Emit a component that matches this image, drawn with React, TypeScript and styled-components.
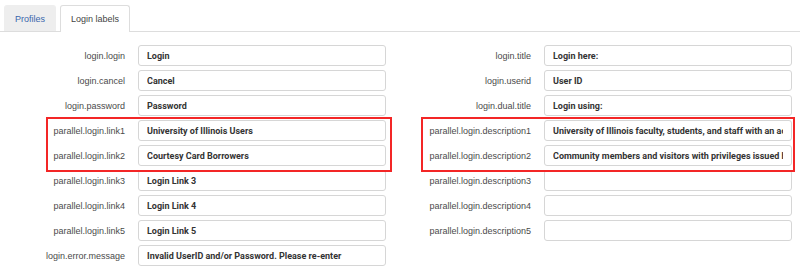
import styled, { createGlobalStyle } from "styled-components";

const GlobalStyle = createGlobalStyle`
    body {
        margin: 0;
        background: #fff;
        font-family: "Liberation Sans", Arial, sans-serif;
        font-size: 9px;
        color: #333;
    }
`;

const Page = styled.div`
    position: relative;
    width: 800px;
    height: 277px;
    overflow: hidden;
`;

const TabBar = styled.div`
    display: flex;
    align-items: flex-end;
    gap: 4px;
    height: 31px;
    padding-left: 4px;
    border-bottom: 1px solid #ddd;
`;

const Tab = styled.div<{ $active?: boolean }>`
    height: ${(p) => (p.$active ? "27px" : "26px")};
    box-sizing: border-box;
    display: flex;
    align-items: center;
    padding: 0 10px;
    border: 1px solid ${(p) => (p.$active ? "#ddd" : "#eee")};
    border-bottom: none;
    border-radius: 3px 3px 0 0;
    background: ${(p) => (p.$active ? "#fff" : "#eee")};
    color: ${(p) => (p.$active ? "#444" : "#3a67ad")};
    margin-bottom: ${(p) => (p.$active ? "-1px" : "0")};
`;

const Columns = styled.div`
    display: flex;
    gap: 20px;
    padding-top: 13px;
`;

const Column = styled.div`
    display: grid;
    grid-template-columns: 125px 248px;
    grid-auto-rows: 21px;
    column-gap: 13px;
    row-gap: 4px;
`;

const Label = styled.label`
    display: flex;
    align-items: center;
    justify-content: flex-end;
    color: #4a4a4a;
    white-space: nowrap;
`;

const Field = styled.input`
    box-sizing: border-box;
    height: 21px;
    width: 100%;
    padding: 0 8px;
    border: 1px solid #d6d6d6;
    border-radius: 3px;
    font-family: Roboto, "Liberation Sans", Arial, sans-serif;
    font-size: 9px;
    font-weight: bold;
    color: #333;
    background: #fff;
    outline: none;
`;

const Highlight = styled.div<{ $left: number; $width: number }>`
    position: absolute;
    top: 117px;
    left: ${(p) => p.$left}px;
    width: ${(p) => p.$width}px;
    height: 55px;
    box-sizing: border-box;
    border: 2px solid #f32626;
    pointer-events: none;
`;

const left: [string, string][] = [
    ["login.login", "Login"],
    ["login.cancel", "Cancel"],
    ["login.password", "Password"],
    ["parallel.login.link1", "University of Illinois Users"],
    ["parallel.login.link2", "Courtesy Card Borrowers"],
    ["parallel.login.link3", "Login Link 3"],
    ["parallel.login.link4", "Login Link 4"],
    ["parallel.login.link5", "Login Link 5"],
    ["login.error.message", "Invalid UserID and/or Password. Please re-enter"],
];

const right: [string, string][] = [
    ["login.title", "Login here:"],
    ["login.userid", "User ID"],
    ["login.dual.title", "Login using:"],
    ["parallel.login.description1", "University of Illinois faculty, students, and staff with an active NetID"],
    ["parallel.login.description2", "Community members and visitors with privileges issued by the Library"],
    ["parallel.login.description3", ""],
    ["parallel.login.description4", ""],
    ["parallel.login.description5", ""],
];

function LabelColumn({ rows }: { rows: [string, string][] }) {
    return (
        <Column>
            {rows.flatMap(([key, value]) => [
                <Label key={key + "-l"}>{key}</Label>,
                <Field key={key + "-f"} readOnly value={value} />,
            ])}
        </Column>
    );
}

export default function App() {
    return (
        <Page>
            <GlobalStyle />
            <TabBar>
                <Tab>Profiles</Tab>
                <Tab $active>Login labels</Tab>
            </TabBar>
            <Columns>
                <LabelColumn rows={left} />
                <LabelColumn rows={right} />
            </Columns>
            <Highlight $left={46} $width={346} />
            <Highlight $left={421} $width={374} />
        </Page>
    );
}
